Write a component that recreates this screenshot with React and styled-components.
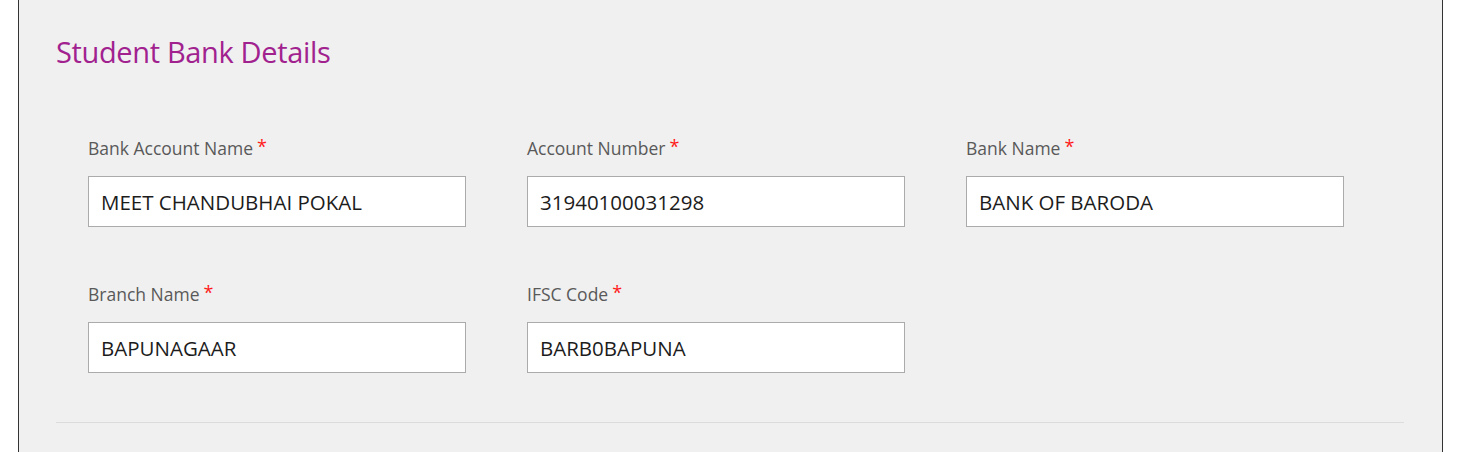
import React from 'react'
import styled, { createGlobalStyle } from 'styled-components'

const GlobalStyle = createGlobalStyle`
  html, body {
    margin: 0;
    padding: 0;
    background: #fff;
  }
  body {
    font-family: "Open Sans", "Noto Sans", sans-serif;
  }
`

const Panel = styled.div`
  margin-left: 18px;
  width: 1425px;
  height: 452px;
  box-sizing: border-box;
  background-color: #f0f0f0;
  border-left: 1px solid #333;
  border-right: 1px solid #333;
  padding: 33px 38px 0 37px;
`

const Title = styled.h2`
  margin: 0;
  font-size: 29px;
  line-height: 38px;
  font-weight: 400;
  color: #a1228f;
  letter-spacing: -0.35px;
`

const Form = styled.div`
  display: grid;
  grid-template-columns: repeat(3, 378px);
  column-gap: 61px;
  row-gap: 53px;
  padding: 63px 0 0 32px;
`

const Field = styled.div`
  display: flex;
  flex-direction: column;
`

const Label = styled.label`
  font-size: 17.5px;
  line-height: 24px;
  color: #595959;
  height: 24px;
  margin-bottom: 18px;
`

const Star = styled.span`
  color: #ff1a1a;
  margin-left: 4px;
  font-size: 18px;
  vertical-align: 2px;
`

const Input = styled.div`
  box-sizing: border-box;
  height: 51px;
  border: 1px solid #ababab;
  background: #fff;
  padding: 0 12px;
  display: flex;
  align-items: center;
  font-size: 20.5px;
  color: #1c1c1c;
`

const Divider = styled.hr`
  margin: 49px 0 0 0;
  border: none;
  border-top: 1px solid #dcdcdc;
`

const fields = [
  { label: 'Bank Account Name', value: 'MEET CHANDUBHAI POKAL' },
  { label: 'Account Number', value: '31940100031298' },
  { label: 'Bank Name', value: 'BANK OF BARODA' },
  { label: 'Branch Name', value: 'BAPUNAGAAR' },
  { label: 'IFSC Code', value: 'BARB0BAPUNA' },
]

const App = () => {
  return (
    <>
      <GlobalStyle />
      <Panel>
        <Title>Student Bank Details</Title>
        <Form>
          {fields.map((f) => (
            <Field key={f.label}>
              <Label>
                {f.label}
                <Star>*</Star>
              </Label>
              <Input>{f.value}</Input>
            </Field>
          ))}
        </Form>
        <Divider />
      </Panel>
    </>
  )
}

export default App
